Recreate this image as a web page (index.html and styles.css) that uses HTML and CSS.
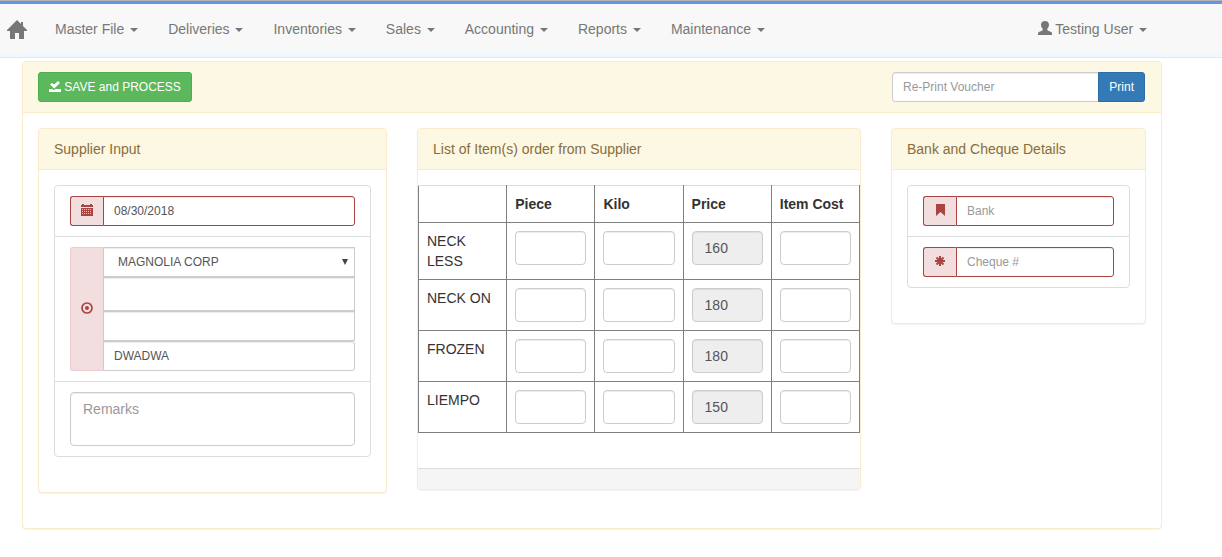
FILE: index.html
```html
<!DOCTYPE html>
<html lang="en">
<head>
<meta charset="utf-8">
<title>Supplier Voucher</title>
<link rel="stylesheet" href="styles.css">
</head>
<body>
<header class="topbar">
  <nav class="navbar" aria-label="Main">
    <a class="brand" href="#" aria-label="Home">
      <svg width="20" height="19" viewBox="0 0 20 19" fill="currentColor" aria-hidden="true"><path d="M10 0 14 4V2h2v4l4 4v1h-3v8h-5v-6H8v6H3v-8H0v-1z"/></svg>
    </a>
    <ul class="menu">
      <li><a href="#">Master File <span class="caret"></span></a></li>
      <li><a href="#">Deliveries <span class="caret"></span></a></li>
      <li><a href="#">Inventories <span class="caret"></span></a></li>
      <li><a href="#">Sales <span class="caret"></span></a></li>
      <li><a href="#">Accounting <span class="caret"></span></a></li>
      <li><a href="#">Reports <span class="caret"></span></a></li>
      <li><a href="#">Maintenance <span class="caret"></span></a></li>
    </ul>
    <ul class="menu menu-right">
      <li><a href="#"><svg class="icon-user" width="14" height="14" viewBox="0 0 14 14" fill="currentColor" aria-hidden="true"><path d="M7 0c2.500 0 4 1.500 4 3.800 0 1.700-.7 3.200-1.700 4v1c0 .5.300.8.800 1l3 1.200c.6.300.9.800.9 1.400V14H0v-1.600c0-.6.300-1.100.9-1.400l3-1.200c.5-.2.800-.5.800-1v-1C3.700 7 3 5.500 3 3.800 3 1.500 4.500 0 7 0z"/></svg> Testing User <span class="caret"></span></a></li>
    </ul>
  </nav>
</header>
<main class="page">
  <section class="panel">
    <div class="panel-heading toolbar">
      <button class="btn btn-save" type="button"><svg width="12" height="12" viewBox="0 0 12 12" fill="currentColor" aria-hidden="true"><path d="M0 8h3l2 1 2-1h5v3H0z"/><path d="M1 3.500 3 2l2.200 1.600L9 0l2 2-5.800 5.500z"/></svg> SAVE and PROCESS</button>
      <div class="input-group print-group">
        <input class="control small" type="text" placeholder="Re-Print Voucher" aria-label="Re-Print Voucher">
        <button class="btn btn-print" type="button">Print</button>
      </div>
    </div>
    <div class="panel-body columns">
      <section class="panel">
        <h2 class="panel-heading">Supplier Input</h2>
        <div class="panel-body">
          <ul class="list">
            <li>
              <div class="input-group error">
                <label class="addon" for="date" aria-label="Date"><svg width="12" height="12" viewBox="0 0 12 12" aria-hidden="true"><path fill="currentColor" d="M0 1h1V0h2v1h6V0h2v1h1v2H0z"/><path fill="currentColor" d="M0 4h12v8H0z"/><path stroke="#f2dede" stroke-opacity=".8" stroke-width="1" stroke-dasharray="1 1" d="M1 5.500h10M1 7.500h10M1 9.500h10"/></svg></label>
                <input class="control small" id="date" type="text" value="08/30/2018">
              </div>
            </li>
            <li>
              <div class="input-group">
                <label class="addon" for="supplier" aria-label="Supplier"><svg width="12" height="12" viewBox="0 0 12 12" aria-hidden="true"><circle cx="6" cy="6" r="5" fill="none" stroke="currentColor" stroke-width="1.700"/><circle cx="6" cy="6" r="2" fill="currentColor"/></svg></label>
                <div class="stack">
                  <div class="select-wrap">
                    <select class="control small" id="supplier"><option>MAGNOLIA CORP</option></select>
                    <svg class="select-arrow" width="6" height="6" viewBox="0 0 6 6" fill="#444" aria-hidden="true"><path d="M0 0h6L3 6z"/></svg>
                  </div>
                  <input class="control" type="text" aria-label="Supplier name">
                  <input class="control small" type="text" aria-label="Supplier contact">
                  <input class="control small" type="text" value="DWADWA" aria-label="Supplier address">
                </div>
              </div>
            </li>
            <li><textarea class="control remarks" rows="2" placeholder="Remarks" aria-label="Remarks"></textarea></li>
          </ul>
        </div>
      </section>
      <section class="panel">
        <h2 class="panel-heading">List of Item(s) order from Supplier</h2>
        <div class="panel-body flush">
          <table class="items">
            <thead><tr><th></th><th>Piece</th><th>Kilo</th><th>Price</th><th>Item Cost</th></tr></thead>
            <tbody>
              <tr><td>NECK LESS</td><td><input class="control" type="text" aria-label="Neck less piece"></td><td><input class="control" type="text" aria-label="Neck less kilo"></td><td><input class="control" type="text" value="160" readonly aria-label="Neck less price"></td><td><input class="control" type="text" aria-label="Neck less item cost"></td></tr>
              <tr><td>NECK ON</td><td><input class="control" type="text" aria-label="Neck on piece"></td><td><input class="control" type="text" aria-label="Neck on kilo"></td><td><input class="control" type="text" value="180" readonly aria-label="Neck on price"></td><td><input class="control" type="text" aria-label="Neck on item cost"></td></tr>
              <tr><td>FROZEN</td><td><input class="control" type="text" aria-label="Frozen piece"></td><td><input class="control" type="text" aria-label="Frozen kilo"></td><td><input class="control" type="text" value="180" readonly aria-label="Frozen price"></td><td><input class="control" type="text" aria-label="Frozen item cost"></td></tr>
              <tr><td>LIEMPO</td><td><input class="control" type="text" aria-label="Liempo piece"></td><td><input class="control" type="text" aria-label="Liempo kilo"></td><td><input class="control" type="text" value="150" readonly aria-label="Liempo price"></td><td><input class="control" type="text" aria-label="Liempo item cost"></td></tr>
            </tbody>
          </table>
        </div>
        <div class="panel-footer"></div>
      </section>
      <section class="panel">
        <h2 class="panel-heading">Bank and Cheque Details</h2>
        <div class="panel-body">
          <ul class="list">
            <li>
              <div class="input-group error">
                <label class="addon" for="bank" aria-label="Bank"><svg width="12" height="12" viewBox="0 0 12 12" fill="currentColor" aria-hidden="true"><path d="M2 0h9v12L6.500 8 2 12z"/></svg></label>
                <input class="control small" id="bank" type="text" placeholder="Bank">
              </div>
            </li>
            <li>
              <div class="input-group error">
                <label class="addon" for="cheque" aria-label="Cheque number"><svg width="12" height="12" viewBox="0 0 12 12" stroke="currentColor" stroke-width="2" aria-hidden="true"><path d="M6 1v10M1 6h10M2.500 2.500l7 7M9.500 2.500l-7 7"/></svg></label>
                <input class="control small" id="cheque" type="text" placeholder="Cheque #">
              </div>
            </li>
          </ul>
        </div>
      </section>
    </div>
  </section>
</main>
</body>
</html>
```

FILE: styles.css
```css
* { box-sizing: border-box; }

body {
  margin: 0;
  background: #fff;
  color: #333;
  font: 14px/20px "Liberation Sans", Arial, sans-serif;
}

/* Navigation */
.topbar {
  border-top: 1px solid #b4b4b4;
  border-bottom: 1px solid #e7e7e7;
  background: #f8f8f8;
}
.navbar {
  display: flex;
  border-top: 3px solid #6495ed;
  border-bottom: 3px solid #f0f8ff;
  padding-right: 60px;
}
.brand {
  display: flex;
  align-items: center;
  width: 40px;
  height: 50px;
  padding-left: 7px;
  color: #777;
}
.menu {
  display: flex;
  margin: 0;
  padding: 0;
  list-style: none;
}
.menu-right { margin-left: auto; }
.menu a {
  display: block;
  padding: 15px;
  color: #777;
  text-decoration: none;
  white-space: nowrap;
}
.caret {
  display: inline-block;
  margin-left: 2px;
  border-top: 4px solid;
  border-right: 4px solid transparent;
  border-left: 4px solid transparent;
  vertical-align: middle;
}
.icon-user { vertical-align: -1px; }

/* Panels */
.page { padding: 3px 60px 8px 22px; }
.panel {
  margin-bottom: 20px;
  border: 1px solid #faebcc;
  border-radius: 4px;
  background: #fff;
  box-shadow: 0 1px 1px rgba(0, 0, 0, .05);
}
.panel-heading {
  margin: 0;
  padding: 10px 15px;
  border-bottom: 1px solid #faebcc;
  border-radius: 3px 3px 0 0;
  background: #fcf8e3;
  color: #8a6d3b;
  font-size: 14px;
  font-weight: normal;
}
.panel-body { padding: 15px; }
.columns {
  display: grid;
  grid-template-columns: minmax(0, 349fr) minmax(0, 444fr) minmax(0, 255fr);
  align-items: start;
  column-gap: 30px;
}
.flush { padding-right: 0; padding-left: 0; }
.panel-footer {
  padding: 10px 15px;
  border-top: 1px solid #ddd;
  border-radius: 0 0 3px 3px;
  background: #f5f5f5;
}
.toolbar {
  display: flex;
  justify-content: space-between;
  padding-right: 16px;
}

/* Buttons */
.btn {
  height: 30px;
  padding: 5px 10px;
  border: 1px solid;
  border-radius: 3px;
  color: #fff;
  font: 12px/18px "Liberation Sans", Arial, sans-serif;
  white-space: nowrap;
}
.btn svg { vertical-align: -2px; }
.btn-save { background: #5cb85c; border-color: #4cae4c; }
.btn-print {
  margin-left: -1px;
  border-color: #2e6da4;
  border-radius: 0 3px 3px 0;
  background: #337ab7;
}

/* Form controls */
.control {
  display: block;
  width: 100%;
  min-width: 0;
  height: 34px;
  margin: 0;
  padding: 6px 12px;
  border: 1px solid #ccc;
  border-radius: 4px;
  background: #fff;
  color: #555;
  font: 14px/20px "Liberation Sans", Arial, sans-serif;
  box-shadow: inset 0 1px 1px rgba(0, 0, 0, .075);
}
.control::placeholder { color: #999; opacity: 1; }
.control[readonly] { background: #eee; }
.control.small {
  height: 30px;
  padding: 5px 10px;
  border-radius: 3px;
  font-size: 12px;
  line-height: 18px;
}
.control.remarks { height: 54px; resize: none; }
.input-group { display: flex; }
.input-group > .control.small { border-radius: 0 3px 3px 0; }
.print-group { width: 253px; }
.print-group > .control.small { border-radius: 3px 0 0 3px; }
.addon {
  display: flex;
  flex: none;
  align-items: center;
  justify-content: center;
  width: 33px;
  padding-bottom: 2px;
  border: 1px solid #ebccd1;
  border-right: 0;
  border-radius: 3px 0 0 3px;
  background: #f2dede;
  color: #a94442;
}
.error .addon, .error .control { border-color: #a94442; }
.stack { flex: 1; min-width: 0; }
.stack .control.small, .stack .control { border-radius: 0; }
.stack > .control.small:last-child { border-radius: 0 3px 3px 0; }
.select-wrap { position: relative; }
.select-wrap .control.small {
  padding-left: 14px;
  appearance: none;
}
.select-arrow {
  position: absolute;
  top: 12px;
  right: 7px;
  pointer-events: none;
}

/* Lists of fields */
.list {
  margin: 0 0 20px;
  padding: 0;
  border: 1px solid #ddd;
  border-radius: 4px;
  list-style: none;
}
.list li { padding: 10px 15px; }
.list li + li { border-top: 1px solid #ddd; }

/* Item table */
.items {
  width: 100%;
  margin-bottom: 20px;
  border-collapse: collapse;
  table-layout: fixed;
}
.items th, .items td {
  padding: 8px;
  border: 1px solid #808080;
  text-align: left;
  vertical-align: top;
}
.items th { border-top-color: #ddd; }
```
